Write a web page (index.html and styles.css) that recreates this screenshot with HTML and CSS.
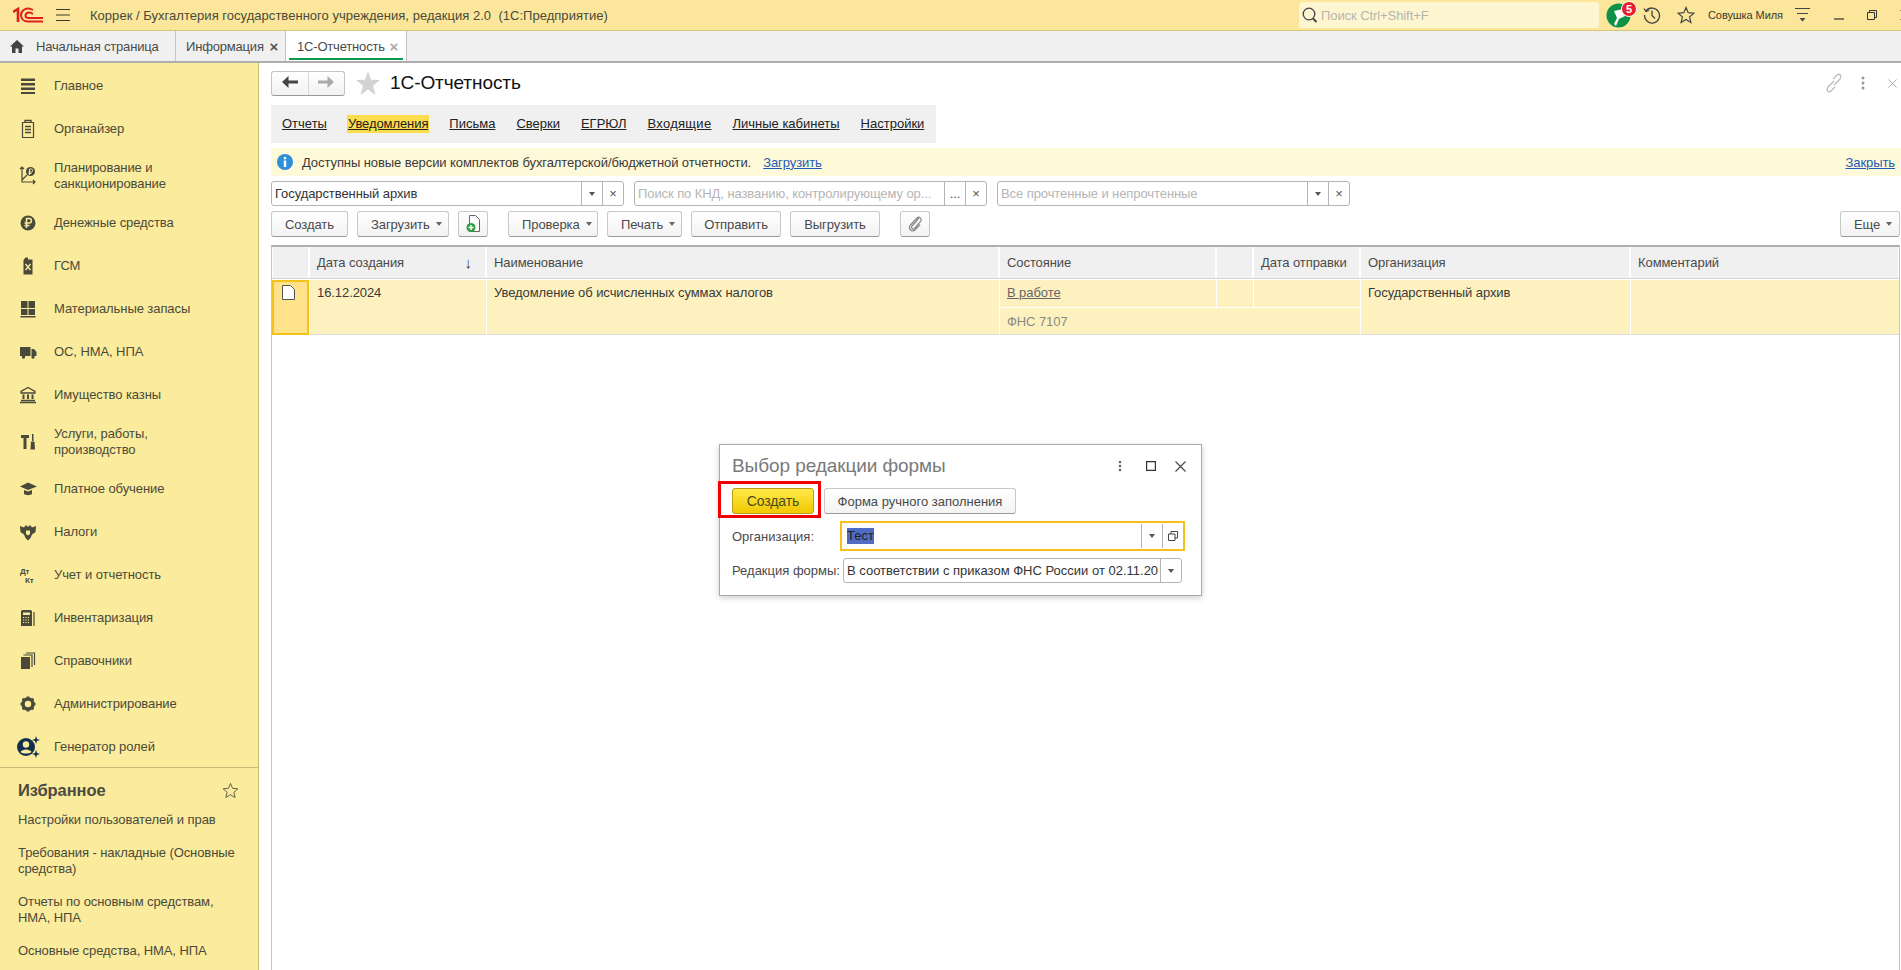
FILE: index.html
```html
<!DOCTYPE html>
<html lang="ru">
<head>
    <meta charset="UTF-8">
    <title>1С-Отчетность</title>
    <link rel="stylesheet" href="styles.css">
</head>
<body>

    <!-- Top bar -->
    <header class="topbar">
        <svg class="logo" width="30" height="16" viewBox="0 0 30 16" fill="none" stroke="#e0201b" stroke-width="2">
            <path d="M0 5L5 2V15" stroke-width="2.6"/>
            <path d="M20 3C13 -1 8 4 8 8C8 12 11 14.500 15 14.500H30"/>
            <path d="M20 7C16 4 12.500 6 12.500 8.500C12.500 10.500 14 11 16 11H30"/>
        </svg>
        <svg class="burger" width="14" height="14" viewBox="0 0 14 14" stroke="#3a3a30" stroke-width="1.1"><path d="M0 1.5H14M0 7H14M0 12.5H14"/></svg>
        <span class="app-title">Коррек / Бухгалтерия государственного учреждения, редакция 2.0&nbsp; (1С:Предприятие)</span>
        <div class="search">
            <svg width="16" height="18" viewBox="0 0 16 18" fill="none" stroke="#444"><circle cx="7" cy="8" r="5.8" stroke-width="1.3"/><path d="M11 12.5L14.5 16" stroke-width="2"/></svg>
            <span>Поиск Ctrl+Shift+F</span>
        </div>
        <div class="notify">
            <svg width="25" height="25" viewBox="0 0 25 25"><circle cx="12.5" cy="12.5" r="12" fill="#0d9146"/><path d="M8 8L17 6 19 13 13 16 10 23 8 21 11 15Z" fill="#fff"/></svg>
            <b class="badge">5</b>
        </div>
        <svg class="history" width="18" height="18" viewBox="0 0 18 18" fill="none" stroke="#444" stroke-width="1.3"><path d="M3 5 A7.5 7.5 0 1 1 1.5 9"/><path d="M1 2.5 L3 5.5 L6 4.5" /><path d="M9 4.5V9.5L12 12.5"/></svg>
        <svg class="fav" width="18" height="18" viewBox="0 0 18 18" fill="none" stroke="#444" stroke-width="1.2"><path d="M9 1.5L11.2 6.7 16.8 7.2 12.6 10.9 13.9 16.4 9 13.5 4.1 16.4 5.4 10.9 1.2 7.2 6.8 6.7Z"/></svg>
        <span class="user">Совушка Миля</span>
        <svg class="user-menu" width="15" height="16" viewBox="0 0 15 16" stroke="#444"><path d="M0 1.5H15M2 6.5H13" fill="none"/><path d="M4.5 11H10.5L7.5 14.5Z" fill="#444" stroke="none"/></svg>
        <svg class="win-min" width="10" height="10" viewBox="0 0 10 10" stroke="#333" stroke-width="1.2"><path d="M0 9H10"/></svg>
        <svg class="win-max" width="10" height="10" viewBox="0 0 10 10" fill="none" stroke="#333"><path d="M.5 2.5H7.5V9.5H.5ZM2.5 2.5V.5H9.5V7.5H7.5"/></svg>
        <svg class="win-close" width="10" height="10" viewBox="0 0 10 10" stroke="#333"><path d="M.5 .5L9.500 9.500M9.500 .5L.5 9.500"/></svg>
    </header>

    <!-- Open tabs -->
    <nav class="tabs">
        <div class="tab tab-home">
            <svg width="14" height="13" viewBox="0 0 14 13" fill="#444"><path d="M7 0L14 6.5H12V13H8.5V8.5H5.5V13H2V6.5H0Z"/></svg>
            <span>Начальная страница</span>
        </div>
        <div class="tab tab-info">
            <span>Информация</span><i class="tab-close">×</i>
        </div>
        <div class="tab tab-active">
            <span>1С-Отчетность</span><i class="tab-close">×</i>
        </div>
    </nav>

    <div class="layout">

        <!-- Sidebar -->
        <aside class="sidebar">
            <div class="nav-list">
                <a class="nav-item">
                    <svg width="20" height="20" viewBox="0 0 20 20" fill="#4a4a3a"><path d="M3 2.5H17V5H3ZM3 7H17V9.500H3ZM3 11.500H17V14H3ZM3 16H17V18H3Z"/></svg>
                    <span>Главное</span>
                </a>
                <a class="nav-item">
                    <svg width="20" height="20" viewBox="0 0 20 20" fill="none" stroke="#4a4a3a"><path d="M4.500 3.500H15.500V18.500H4.500Z" stroke-width="1.2"/><path d="M7 3.500V1.500H13V3.500M7 7.500H13M7 10.500H13M7 13.500H13" stroke-width="1.4"/></svg>
                    <span>Органайзер</span>
                </a>
                <a class="nav-item nav-item-tall">
                    <svg width="20" height="20" viewBox="0 0 20 20" fill="none" stroke="#4a4a3a" stroke-width="1.2"><path d="M4 1V16H17M2 3L4 1 6 3M15 14L17 16 15 18M4 14L9 9"/><circle cx="12.500" cy="5.500" r="4.500" fill="#4a4a3a" stroke="none"/><path d="M11.500 9V3H13.500C15 3 15 6 13.500 6H10.500M10.500 7.500H13.500" stroke="#fbeb9c" stroke-width="1"/></svg>
                    <span>Планирование и<br>санкционирование</span>
                </a>
                <a class="nav-item">
                    <svg width="20" height="20" viewBox="0 0 20 20" fill="none"><circle cx="10" cy="10" r="7.500" fill="#4a4a3a"/><path d="M8.500 15V5.500H11.500C14 5.500 14 10 11.500 10H6.500M6.500 12.500H11.500" stroke="#fbeb9c" stroke-width="1.500"/></svg>
                    <span>Денежные средства</span>
                </a>
                <a class="nav-item">
                    <svg width="20" height="20" viewBox="0 0 20 20"><path d="M5.500 4L7.500 1.500H10V3.500H14.500V18.500H5.500Z" fill="#4a4a3a"/><path d="M7.500 8L12.500 14M12.500 8L7.500 14" stroke="#fbeb9c" stroke-width="1.400"/></svg>
                    <span>ГСМ</span>
                </a>
                <a class="nav-item">
                    <svg width="20" height="20" viewBox="0 0 20 20" fill="#4a4a3a"><path d="M3 2H9.500V9H3ZM10.500 2H17V9H10.500ZM3 10H9.500V16H3ZM10.500 10H17V16H10.500ZM2.500 17H17.500V18.500H2.500Z"/></svg>
                    <span>Материальные запасы</span>
                </a>
                <a class="nav-item">
                    <svg width="20" height="20" viewBox="0 0 20 20" fill="#4a4a3a"><path d="M2 5H12.500V14H2ZM13.500 7H16L18.500 10V14H13.500Z"/><circle cx="5.500" cy="15" r="1.700"/><circle cx="15" cy="15" r="1.700"/></svg>
                    <span>ОС, НМА, НПА</span>
                </a>
                <a class="nav-item">
                    <svg width="20" height="20" viewBox="0 0 20 20" fill="none" stroke="#4a4a3a"><path d="M10 2.500L17 6.500V8H3V6.500Z" stroke-width="1.300"/><path d="M5.500 9.500V14M10 9.500V14M14.500 9.500V14" stroke-width="2"/><path d="M3 15.500H17M2 17.500H18" stroke-width="1.300"/></svg>
                    <span>Имущество казны</span>
                </a>
                <a class="nav-item nav-item-tall">
                    <svg width="20" height="20" viewBox="0 0 20 20" fill="#4a4a3a"><path d="M3 3H11V6H8.500V17H5.500V6H3ZM14 2H15.500V9H14ZM13 9.500H16.500L17 17.500H12.500Z"/></svg>
                    <span>Услуги, работы,<br>производство</span>
                </a>
                <a class="nav-item">
                    <svg width="20" height="20" viewBox="0 0 20 20" fill="#4a4a3a"><path d="M10 3.500L19 7.500 10 11 2 7.500ZM6 11L10 12.500 14 11V15C12 16.500 8 16.500 6 15Z"/></svg>
                    <span>Платное обучение</span>
                </a>
                <a class="nav-item">
                    <svg width="20" height="20" viewBox="0 0 20 20" fill="#4a4a3a"><path d="M2 4L6 5.500 8 3 10 5 12 3 14 5.500 18 4 17.500 10 14 12.500 12.500 16 10 18.500 7.500 16 6 12.500 2.500 10Z"/><path d="M8 8.500H12V12L10 13.500 8 12Z" fill="#fbeb9c"/></svg>
                    <span>Налоги</span>
                </a>
                <a class="nav-item">
                    <svg width="20" height="20" viewBox="0 0 20 20" fill="#4a4a3a" font-family="Liberation Sans, sans-serif" font-size="8" font-weight="bold"><text x="2" y="9">Дт</text><text x="7" y="18">Кт</text></svg>
                    <span>Учет и отчетность</span>
                </a>
                <a class="nav-item">
                    <svg width="20" height="20" viewBox="0 0 20 20"><path d="M3 3.500C3 2.500 4 2 5 2H12C13 2 14 2.500 14 3.500V18H3Z" fill="#4a4a3a"/><path d="M5 4.500H12V7H5Z" fill="#fbeb9c"/><path d="M5 9.500H12M5 12H12M5 14.500H12" stroke="#fbeb9c" stroke-dasharray="1.200 1.200"/><path d="M16 4V18" stroke="#4a4a3a" stroke-width="1.200"/></svg>
                    <span>Инвентаризация</span>
                </a>
                <a class="nav-item">
                    <svg width="20" height="20" viewBox="0 0 20 20"><path d="M3 6H12V18H3Z" fill="#4a4a3a"/><path d="M5.500 4H14V16M8 2H16.500V14" fill="none" stroke="#4a4a3a" stroke-width="1.200"/></svg>
                    <span>Справочники</span>
                </a>
                <a class="nav-item">
                    <svg width="20" height="20" viewBox="0 0 20 20" fill="none"><circle cx="10" cy="10" r="5" stroke="#4a4a3a" stroke-width="3.500"/><path d="M10 2.500V17.500M2.500 10H17.500M4.700 4.700L15.300 15.300M15.300 4.700L4.700 15.300" stroke="#4a4a3a" stroke-width="2.600" stroke-dasharray="2.600 9.800 2.600"/></svg>
                    <span>Администрирование</span>
                </a>
                <a class="nav-item nav-item-role">
                    <svg width="24" height="24" viewBox="0 0 24 24" fill="#12304d"><circle cx="10" cy="12" r="9"/><circle cx="10" cy="9.500" r="3.200" fill="#fbeb9c"/><path d="M4.500 17C6 13.500 14 13.500 15.500 17 13 19 7 19 4.500 17Z" fill="#fbeb9c"/><path d="M20 1L21 4 24 5 21 6 20 9 19 6 16 5 19 4ZM20 15L21 18 24 19 21 20 20 23 19 20 16 19 19 18Z"/></svg>
                    <span>Генератор ролей</span>
                </a>
            </div>
            <section class="favorites">
                <div class="favorites-head">
                    <h2>Избранное</h2>
                    <svg width="17" height="17" viewBox="0 0 18 18" fill="none" stroke="#5a5a4a"><path d="M9 1.500L11.200 6.700 16.800 7.200 12.600 10.900 13.900 16.400 9 13.500 4.100 16.400 5.400 10.900 1.200 7.200 6.800 6.700Z"/></svg>
                </div>
                <a>Настройки пользователей и прав</a>
                <a>Требования - накладные (Основные средства)</a>
                <a>Отчеты по основным средствам, НМА, НПА</a>
                <a>Основные средства, НМА, НПА</a>
            </section>
        </aside>

        <!-- Main form -->
        <main class="main">
            <div class="form-head">
                <div class="history-nav">
                    <button>
                        <svg width="16" height="12" viewBox="0 0 16 12" fill="#444"><path d="M6.500 0V4.500H16V7.500H6.500V12L0 6Z"/></svg>
                    </button>
                    <button>
                        <svg width="16" height="12" viewBox="0 0 16 12" fill="#aaa"><path d="M9.500 0V4.500H0V7.500H9.500V12L16 6Z"/></svg>
                    </button>
                </div>
                <svg class="head-star" width="24" height="24" viewBox="0 0 24 24" fill="#d3d3d3"><path d="M12 0L15 8.800 24 9 17 14.800 19.500 24 12 18.500 4.500 24 7 14.800 0 9 9 8.800Z"/></svg>
                <h1>1С-Отчетность</h1>
                <div class="head-actions">
                    <svg class="head-link" width="16" height="20" viewBox="0 0 16 20" fill="none" stroke="#bbb" stroke-width="1.300"><path d="M7 6L11 2C14 0 16 3 14 6L8 12M9 14L5 18C2 20 0 17 2 14L8 8"/></svg>
                    <svg width="4" height="14" viewBox="0 0 4 14" fill="#999"><circle cx="2" cy="2" r="1.500"/><circle cx="2" cy="7" r="1.500"/><circle cx="2" cy="12" r="1.500"/></svg>
                    <svg width="9" height="9" viewBox="0 0 9 9" stroke="#aaa"><path d="M.5 .5L8.500 8.500M8.500 .5L.5 8.500"/></svg>
                </div>
            </div>

            <div class="pages">
                <a>Отчеты</a>
                <a class="page-active">Уведомления</a>
                <a>Письма</a>
                <a>Сверки</a>
                <a>ЕГРЮЛ</a>
                <a class="page-wide">Входящие</a>
                <a>Личные кабинеты</a>
                <a>Настройки</a>
            </div>

            <div class="info-bar">
                <svg width="16" height="16" viewBox="0 0 16 16"><circle cx="8" cy="8" r="8" fill="#2f8fd8"/><path d="M6.800 3H9.200V5.200H6.800ZM6.800 6.500H9.200V13H6.800Z" fill="#fff"/></svg>
                <span>Доступны новые версии комплектов бухгалтерской/бюджетной отчетности.</span>
                <a>Загрузить</a>
                <a class="info-close">Закрыть</a>
            </div>

            <div class="filters">
                <div class="field filter-org">
                    <span class="field-value">Государственный архив</span>
                    <i class="field-btn field-arrow"></i>
                    <i class="field-btn">×</i>
                </div>
                <div class="field filter-search">
                    <span class="field-value field-hint">Поиск по КНД, названию, контролирующему ор...</span>
                    <i class="field-btn">...</i>
                    <i class="field-btn">×</i>
                </div>
                <div class="field filter-read">
                    <span class="field-value field-hint">Все прочтенные и непрочтенные</span>
                    <i class="field-btn field-arrow"></i>
                    <i class="field-btn">×</i>
                </div>
            </div>

            <div class="toolbar">
                <button class="btn btn-create">Создать</button>
                <button class="btn btn-menu btn-load">Загрузить <i class="arrow"></i></button>
                <button class="btn btn-icon btn-add">
                    <svg width="16" height="18" viewBox="0 0 16 18"><path d="M4.500 .5H10.500L14.500 4.500V16.500H4.500Z" fill="#fff" stroke="#666"/><circle cx="6" cy="12.500" r="4.500" fill="#2ea043"/><path d="M6 10V15M3.500 12.500H8.500" stroke="#fff" stroke-width="1.400"/></svg>
                </button>
                <button class="btn btn-menu btn-check">Проверка <i class="arrow"></i></button>
                <button class="btn btn-menu btn-print">Печать <i class="arrow"></i></button>
                <button class="btn btn-send">Отправить</button>
                <button class="btn btn-export">Выгрузить</button>
                <button class="btn btn-icon btn-clip">
                    <svg width="14" height="16" viewBox="0 0 14 16" fill="none" stroke="#888" stroke-width="1.200"><path d="M11 2L4 10C2.500 12 5 14 6.500 12.500L12.500 5.500C14.500 2.500 11 0 9 2L2.500 9C-.5 13 4 17 7.500 13.500L12 8.500"/></svg>
                </button>
                <button class="btn btn-menu btn-more">Еще <i class="arrow"></i></button>
            </div>

            <div class="grid">
                <div class="grid-head"></div>
                <div class="grid-head grid-head-sort">Дата создания <span>↓</span></div>
                <div class="grid-head">Наименование</div>
                <div class="grid-head">Состояние</div>
                <div class="grid-head"></div>
                <div class="grid-head">Дата отправки</div>
                <div class="grid-head">Организация</div>
                <div class="grid-head">Комментарий</div>

                <div class="cell cell-selected">
                    <svg width="13" height="15" viewBox="0 0 13 15"><path d="M.5 .5H8.500L12.500 4.500V14.500H.5Z" fill="#fff" stroke="#555"/></svg>
                </div>
                <div class="cell cell-tall">16.12.2024</div>
                <div class="cell cell-tall">Уведомление об исчисленных суммах налогов</div>
                <div class="cell cell-link">В работе</div>
                <div class="cell"></div>
                <div class="cell"></div>
                <div class="cell cell-tall">Государственный архив</div>
                <div class="cell cell-tall"></div>
                <div class="cell cell-sub">ФНС 7107</div>
            </div>

            <!-- Dialog over the list -->
            <div class="dialog">
                <div class="dialog-head">
                    <h3>Выбор редакции формы</h3>
                    <svg width="4" height="12" viewBox="0 0 4 12" fill="#666"><circle cx="2" cy="2" r="1.300"/><circle cx="2" cy="6" r="1.300"/><circle cx="2" cy="10" r="1.300"/></svg>
                    <svg class="dialog-max" width="10" height="10" viewBox="0 0 10 10" fill="none" stroke="#333" stroke-width="1.200"><path d="M.6 .6H9.400V9.400H.6Z"/></svg>
                    <svg class="dialog-close" width="11" height="11" viewBox="0 0 11 11" stroke="#444" stroke-width="1.100"><path d="M.5 .5L10.500 10.500M10.500 .5L.5 10.500"/></svg>
                </div>
                <div class="dialog-actions">
                    <button class="btn btn-default">Создать</button>
                    <button class="btn btn-manual">Форма ручного заполнения</button>
                </div>
                <div class="dialog-row dialog-row-org">
                    <label>Организация:</label>
                    <div class="field field-focus">
                        <span class="field-value"><mark>Тест</mark></span>
                        <i class="field-btn field-arrow"></i>
                        <i class="field-btn">
                            <svg width="10" height="10" viewBox="0 0 10 10" fill="none" stroke="#444"><path d="M3 3V.5H9.500V7H7M.5 3H7V9.500H.5Z"/></svg>
                        </i>
                    </div>
                </div>
                <div class="dialog-row">
                    <label>Редакция формы:</label>
                    <div class="field field-edition">
                        <span class="field-value">В соответствии с приказом ФНС России от 02.11.20</span>
                        <i class="field-btn field-arrow"></i>
                    </div>
                </div>
                <div class="callout"></div>
            </div>
        </main>
    </div>

</body>
</html>
```

FILE: styles.css
```css
/* General */
* {
    box-sizing: border-box;
}
body {
    margin: 0;
    height: 970px;
    overflow: hidden;
    display: flex;
    flex-direction: column;
    font-family: "Liberation Sans", Arial, sans-serif;
    font-size: 13px;
    letter-spacing: -0.08px;
    color: #4a4a4a;
    background: #fff;
}
button {
    font: inherit;
    letter-spacing: inherit;
    color: inherit;
}
i {
    font-style: normal;
}

/* Top bar */
.topbar {
    flex: none;
    height: 31px;
    display: flex;
    align-items: center;
    background: #fbe69b;
    border-bottom: 1px solid #d6c67a;
    overflow: hidden;
}
.logo {
    margin-left: 13px;
}
.burger {
    margin-left: 13px;
}
.app-title {
    margin-left: 20px;
    color: #4a4a3a;
    letter-spacing: 0.03px;
    white-space: nowrap;
}
.search {
    margin-left: auto;
    width: 300px;
    height: 26px;
    display: flex;
    align-items: center;
    gap: 3px;
    padding-left: 3px;
    background: #fdf6d0;
    border-radius: 3px;
    color: #b5b5b0;
}
.notify {
    position: relative;
    flex: none;
    width: 25px;
    height: 25px;
    margin-left: 7px;
}
.notify svg {
    display: block;
}
.badge {
    position: absolute;
    top: -2px;
    right: -6px;
    width: 16px;
    height: 16px;
    border: 1px solid #fff;
    border-radius: 50%;
    background: #e8202a;
    color: #fff;
    font-size: 11px;
    line-height: 14px;
    text-align: center;
}
.history {
    flex: none;
    margin-left: 12px;
}
.fav {
    flex: none;
    margin-left: 16px;
}
.user {
    flex: none;
    margin-left: 13px;
    width: 76px;
    font-size: 11px;
    color: #3a3a2a;
    white-space: nowrap;
}
.user-menu {
    flex: none;
    margin-left: 11px;
}
.win-min {
    flex: none;
    margin-left: 24px;
}
.win-max {
    flex: none;
    margin-left: 23px;
}
.win-close {
    flex: none;
    margin-left: 23px;
    margin-right: -9px;
}

/* Open tabs */
.tabs {
    flex: none;
    height: 32px;
    display: flex;
    background: #f0f0f0;
    border-bottom: 2px solid #adadad;
}
.tab {
    display: flex;
    align-items: center;
    border-right: 1px solid #c4c4c4;
    color: #4a4a4a;
    letter-spacing: -0.18px;
    white-space: nowrap;
}
.tab-home {
    width: 176px;
    padding-left: 10px;
    gap: 12px;
}
.tab-info {
    width: 110px;
    padding: 0 7px 0 10px;
}
.tab-active {
    position: relative;
    width: 121px;
    padding: 0 8px 0 11px;
    background: #fff;
}
.tab-active::after {
    content: "";
    position: absolute;
    left: 3px;
    right: 3px;
    bottom: 1px;
    height: 2px;
    background: #0b9a50;
}
.tab-close {
    margin-left: auto;
    font-size: 15px;
    font-weight: bold;
    color: #555;
}
.tab-active .tab-close {
    color: #aaa;
}

.layout {
    flex: 1;
    min-height: 0;
    display: flex;
}

/* Sidebar */
.sidebar {
    flex: none;
    width: 259px;
    display: flex;
    flex-direction: column;
    background: #fbeb9c;
    border-right: 1px solid #c9bc78;
    color: #4a4a3a;
}
.nav-list {
    flex: none;
    height: 705px;
    padding-top: 1px;
    border-bottom: 1px solid #c9bc78;
}
.nav-item {
    height: 43px;
    display: flex;
    align-items: center;
    gap: 16px;
    padding-left: 18px;
    line-height: 16px;
}
.nav-item-tall {
    height: 51px;
}
.nav-item-role {
    padding-left: 16px;
    gap: 14px;
}
.favorites {
    padding: 12px 18px 0;
}
.favorites-head {
    display: flex;
    justify-content: space-between;
    align-items: center;
    height: 20px;
    margin-right: 1px;
    margin-bottom: 12px;
}
.favorites h2 {
    margin: 0;
    font-size: 16.5px;
    color: #4a4a42;
}
.favorites a {
    display: block;
    line-height: 16px;
    margin-bottom: 17px;
}

/* Main form */
.main {
    position: relative;
    flex: 1;
    min-width: 0;
    display: flex;
    flex-direction: column;
    padding: 8px 0 0 12px;
}
.form-head {
    flex: none;
    height: 24px;
    display: flex;
    align-items: center;
}
.history-nav {
    display: flex;
    width: 74px;
    height: 25px;
    border: 1px solid #c4c4c4;
    border-bottom-color: #999;
    border-radius: 3px;
    background: linear-gradient(#fff, #f2f2f2);
}
.history-nav button {
    flex: 1;
    border: 0;
    padding: 0;
    background: none;
}
.history-nav button + button {
    border-left: 1px solid #d8d8d8;
}
.head-star {
    margin-left: 11px;
}
.form-head h1 {
    margin: 0 0 0 10px;
    font-size: 19px;
    font-weight: normal;
    color: #111;
}
.head-actions {
    margin-left: auto;
    display: flex;
    align-items: center;
    gap: 23px;
    padding-right: 4px;
}
.head-link {
    margin-right: -4px;
}
.pages {
    flex: none;
    width: 665px;
    height: 38px;
    margin-top: 10px;
    display: flex;
    align-items: center;
    padding-left: 11px;
    gap: 21px;
    background: #f0f0f0;
    letter-spacing: 0;
}
.pages a {
    color: #222;
    text-decoration: underline;
    line-height: 18px;
    white-space: nowrap;
}
.pages .page-active {
    background: #fbdc4c;
    margin: 0 -1px;
    padding: 0 1px;
    letter-spacing: -0.08px;
}
.pages .page-wide {
    letter-spacing: 0.3px;
}
.info-bar {
    flex: none;
    height: 28px;
    margin-top: 5px;
    display: flex;
    align-items: center;
    padding: 0 6px;
    background: #fef9d8;
    color: #3a3a3a;
}
.info-bar span {
    margin-left: 9px;
}
.info-bar a {
    margin-left: 12px;
    color: #1d5bb8;
    text-decoration: underline;
}
.info-bar .info-close {
    margin-left: auto;
}

/* Fields */
.filters {
    flex: none;
    height: 25px;
    margin-top: 5px;
    display: flex;
    gap: 10px;
}
.field {
    height: 25px;
    display: flex;
    align-items: center;
    border: 1px solid #b5b5b5;
    border-radius: 3px;
    background: #fff;
}
.filter-org {
    width: 353px;
}
.filter-search {
    width: 353px;
}
.filter-read {
    width: 353px;
}
.field-value {
    flex: 1;
    min-width: 0;
    padding-left: 3px;
    color: #333;
    white-space: nowrap;
    overflow: hidden;
}
.field-hint {
    color: #b5b5b5;
}
.field-btn {
    position: relative;
    flex: none;
    width: 21px;
    height: 100%;
    display: flex;
    align-items: center;
    justify-content: center;
    border-left: 1px solid #b5b5b5;
    color: #555;
}
.field-arrow::before {
    content: "";
    border: 3px solid transparent;
    border-top: 4px solid #555;
    border-bottom: 0;
}

/* Toolbar */
.toolbar {
    flex: none;
    height: 26px;
    margin-top: 5px;
    display: flex;
    gap: 9px;
}
.btn {
    height: 26px;
    padding: 0;
    display: flex;
    align-items: center;
    justify-content: center;
    gap: 5px;
    border: 1px solid #c8c8c8;
    border-bottom-color: #9a9a9a;
    border-radius: 3px;
    background: linear-gradient(#fff, #f3f3f3);
    color: #4a4a4a;
    white-space: nowrap;
}
.btn-menu {
    justify-content: flex-start;
    padding-left: 13px;
    gap: 6px;
}
.arrow {
    border: 3px solid transparent;
    border-top: 4px solid #666;
    border-bottom: 0;
}
.btn-create { width: 77px; }
.btn-load { width: 92px; }
.btn-icon { width: 30px; }
.btn-check { width: 90px; margin-left: 11px; }
.btn-print { width: 75px; }
.btn-send { width: 90px; }
.btn-export { width: 90px; }
.btn-clip { margin-left: 11px; }
.btn-more { width: 60px; margin-left: auto; margin-right: 1px; }

/* List */
.grid {
    flex: 1;
    margin-top: 8px;
    margin-right: 1px;
    display: grid;
    grid-template-columns: 37px 177px 513px 217px 37px 107px 270px 1fr;
    grid-template-rows: 33px 27px 28px 1fr;
    border-top: 2px solid #b0b0b0;
    border-left: 1px solid #c4c4c4;
    border-right: 1px solid #c4c4c4;
}
.grid-head {
    height: 31px;
    display: flex;
    align-items: center;
    justify-content: space-between;
    padding: 0 7px;
    background: #f0f0f0;
    border-right: 1px solid #fff;
    border-left: 1px solid #fff;
    box-shadow: 0 1px 0 #d4d4d4;
    color: #4a4a4a;
    white-space: nowrap;
}
.grid-head-sort span {
    font-size: 15px;
    color: #333;
    margin-right: 6px;
}
.cell {
    padding: 5px 7px 0;
    background: #fdf1c0;
    border-left: 1px solid #fff;
    color: #3a3a3a;
}
.cell-tall {
    grid-row: span 2;
    border-bottom: 1px solid #ddd;
}
.cell-selected {
    grid-row: span 2;
    padding: 3px 0 0 8px;
    background: #ffe28a;
    border: 2px solid #f5c21b;
}
.cell-link {
    color: #666;
    text-decoration: underline;
}
.cell-sub {
    grid-column: 4 / span 3;
    grid-row: 3;
    padding-top: 6px;
    border-top: 1px solid #fff;
    border-bottom: 1px solid #ddd;
    color: #8a8a80;
}

/* Dialog */
.dialog {
    position: absolute;
    left: 460px;
    top: 381px;
    width: 483px;
    height: 152px;
    padding: 0 12px;
    background: #fff;
    border: 1px solid #aaa;
    box-shadow: 0 2px 6px rgba(0, 0, 0, 0.2);
}
.dialog-head {
    height: 42px;
    display: flex;
    align-items: center;
}
.dialog-head h3 {
    flex: 1;
    margin: 0;
    font-size: 19px;
    font-weight: normal;
    color: #7a7a7a;
}
.dialog-max {
    margin-left: 24px;
}
.dialog-close {
    margin: 0 3px 0 19px;
}
.dialog-actions {
    display: flex;
    gap: 9px;
    margin-top: 1px;
}
.btn-default {
    width: 82px;
    font-size: 14px;
    background: linear-gradient(#ffe94a, #f0c800);
    border-color: #b89e10;
    color: #4a4a20;
}
.btn-manual {
    width: 192px;
    margin-left: 1px;
    letter-spacing: 0;
}
.dialog-row {
    display: flex;
    align-items: center;
    margin-top: 7px;
    color: #4a4a4a;
    letter-spacing: 0;
}
.dialog-row label {
    width: 111px;
    white-space: nowrap;
}
.dialog-row-org label {
    width: 108px;
}
.field-focus {
    width: 345px;
    height: 30px;
    border: 2px solid #f5c21b;
    border-radius: 0;
}
.field-focus .field-btn {
    height: 24px;
}
.field-focus .field-value {
    padding-left: 5px;
}
mark {
    display: inline-block;
    height: 16px;
    line-height: 16px;
    background: #4f6bc4;
    color: #222;
}
.field-edition {
    width: 339px;
}
.callout {
    position: absolute;
    left: -2px;
    top: 36px;
    width: 103px;
    height: 37px;
    border: 3px solid #f00000;
}
```
